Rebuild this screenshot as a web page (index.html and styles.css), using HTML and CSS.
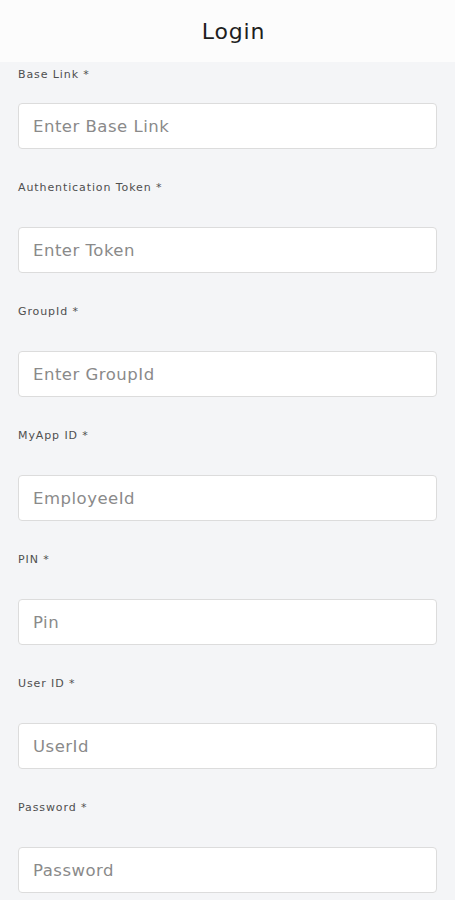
FILE: index.html
```html
<!DOCTYPE html>
<html lang="en">
<head>
  <meta charset="UTF-8">
  <title>Login</title>
  <link rel="stylesheet" href="styles.css">
</head>
<body>

  <!-- Top bar -->
  <header class="topbar">
    <h1>Login</h1>
  </header>

  <!-- Settings form -->
  <form class="login-form">
    <div class="field">
      <label for="baseLink">Base Link *</label>
      <input id="baseLink" type="text" placeholder="Enter Base Link">
    </div>
    <div class="field">
      <label for="token">Authentication Token *</label>
      <input id="token" type="text" placeholder="Enter Token">
    </div>
    <div class="field">
      <label for="groupId">GroupId *</label>
      <input id="groupId" type="text" placeholder="Enter GroupId">
    </div>
    <div class="field">
      <label for="appId">MyApp ID *</label>
      <input id="appId" type="text" placeholder="EmployeeId">
    </div>
    <div class="field">
      <label for="pin">PIN *</label>
      <input id="pin" type="text" placeholder="Pin">
    </div>
    <div class="field">
      <label for="userId">User ID *</label>
      <input id="userId" type="text" placeholder="UserId">
    </div>
    <div class="field">
      <label for="password">Password *</label>
      <input id="password" type="password" placeholder="Password">
    </div>
  </form>

</body>
</html>
```

FILE: styles.css
```css
/* RESET & BASE */
* {
  margin: 0;
  padding: 0;
  box-sizing: border-box;
}
body {
  background: #f4f5f7;
  font-family: 'DejaVu Sans', 'Noto Sans', sans-serif;
  color: #222;
  overflow: hidden;
}

/* TOP BAR */
.topbar {
  height: 62px;
  background: #fcfcfc;
  display: flex;
  align-items: center;
  justify-content: center;
}
.topbar h1 {
  font-size: 22px;
  font-weight: 400;
  color: #1e1e1e;
  letter-spacing: 0.8px;
  padding-left: 12px;
}

/* FORM */
.login-form {
  padding: 0 18px;
  display: flex;
  flex-direction: column;
}
.field {
  display: flex;
  flex-direction: column;
  padding-top: 31px;
}
.field:first-child {
  padding-top: 5px;
}
.field label {
  font-size: 11px;
  line-height: 16px;
  letter-spacing: 0.9px;
  color: #4f4f4f;
  margin-bottom: 31px;
}
.field:first-child label {
  margin-bottom: 20px;
}
.field input {
  height: 46px;
  width: 100%;
  border: 1px solid #dcdcdc;
  border-radius: 4px;
  background: #fff;
  padding: 0 14px;
  font-family: inherit;
  font-size: 16.5px;
  letter-spacing: 0.5px;
  color: #333;
  outline: none;
}
.field input::placeholder {
  color: #8a8a8a;
}
```
